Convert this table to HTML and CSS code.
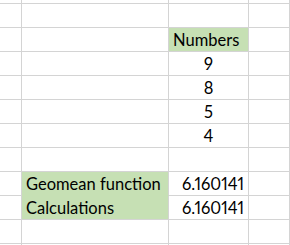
FILE: index.html
```html
<!DOCTYPE html>
<html>
<head>
<meta charset="utf-8">
<link rel="stylesheet" href="styles.css">
</head>
<body>
<div class="sheet">
  <div class="c top"></div><div class="c top"></div><div class="c top"></div><div class="c top"></div>

  <div class="c"></div><div class="c"></div><div class="c"></div><div class="c"></div>

  <div class="c"></div><div class="c"></div><div class="c green left">Numbers</div><div class="c"></div>

  <div class="c"></div><div class="c"></div><div class="c center">9</div><div class="c"></div>

  <div class="c"></div><div class="c"></div><div class="c center">8</div><div class="c"></div>

  <div class="c"></div><div class="c"></div><div class="c center">5</div><div class="c"></div>

  <div class="c"></div><div class="c"></div><div class="c center">4</div><div class="c"></div>

  <div class="c"></div><div class="c"></div><div class="c"></div><div class="c"></div>

  <div class="c"></div><div class="c green left joined">Geomean function</div><div class="c right">6.160141</div><div class="c"></div>

  <div class="c"></div><div class="c green left">Calculations</div><div class="c right">6.160141</div><div class="c"></div>

  <div class="c"></div><div class="c"></div><div class="c"></div><div class="c"></div>

  <div class="c"></div><div class="c"></div><div class="c"></div><div class="c"></div>
</div>
</body>
</html>
```

FILE: styles.css
```css
html, body {
  margin: 0;
  padding: 0;
  background: #ffffff;
}

.sheet {
  display: grid;
  grid-template-columns: 22px 147px 80px 1fr;
  grid-template-rows: 4px repeat(11, 24px);
  width: 290px;
  height: 245px;
  overflow: hidden;
  font-family: "Lato", "Open Sans", sans-serif;
  font-size: 16.5px;
  font-variant-numeric: proportional-nums;
  color: #000000;
}

.c {
  box-sizing: border-box;
  border-right: 1px solid #d4d4d4;
  border-bottom: 1px solid #d4d4d4;
  display: flex;
  align-items: flex-end;
  line-height: 20px;
  padding: 0 4px 1px 4px;
  white-space: nowrap;
  overflow: visible;
}

.top {
  padding: 0;
}

.green {
  background: #c6e0b4;
}

.joined {
  border-bottom-color: #c6e0b4;
}

.left {
  justify-content: flex-start;
}

.center {
  justify-content: center;
}

.right {
  justify-content: flex-end;
}
```
